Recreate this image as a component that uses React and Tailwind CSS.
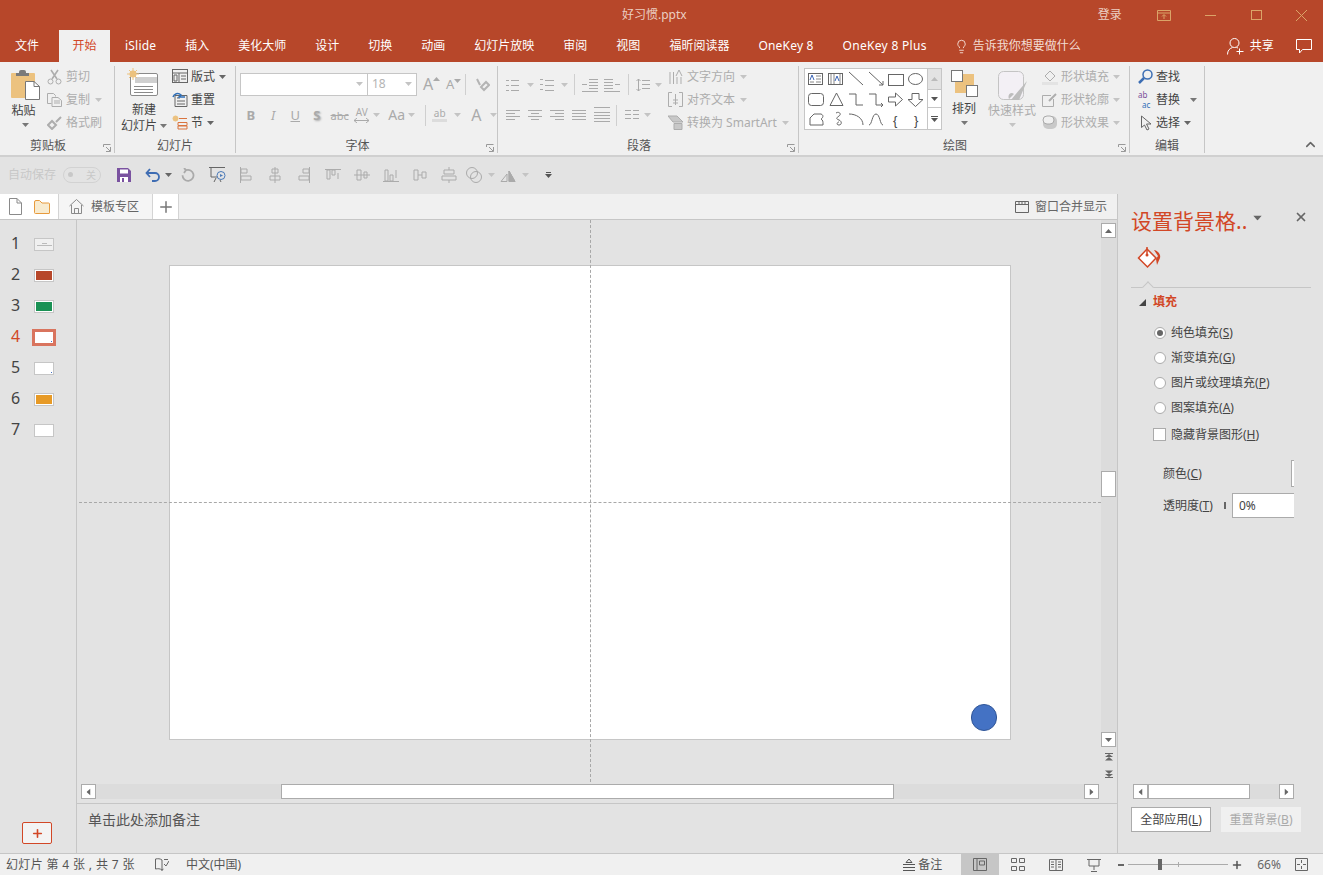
import { ChevronUp, Lightbulb, Plus, X } from 'lucide-react';

const tabs = ['插入', '美化大师', '设计', '切换', '动画', '幻灯片放映', '审阅', '视图', '福昕阅读器'];

const slides = [
  { n: 1, kind: 'title' },
  { n: 2, fill: 'bg-[#b7472a]' },
  { n: 3, fill: 'bg-[#1a9154]' },
  { n: 4, kind: 'dot', active: true },
  { n: 5, kind: 'dot' },
  { n: 6, fill: 'bg-[#e79a26]' },
  { n: 7 },
];

function Ico({ w = 16, h = 16, className = '', sw = 1, children }) {
  return (
    <svg width={w} height={h} viewBox={`0 0 ${w} ${h}`} fill="none" stroke="currentColor" strokeWidth={sw} className={`shrink-0 ${className}`}>
      {children}
    </svg>
  );
}

function Caret({ className = 'text-[#777]' }) {
  return (
    <svg width="7" height="4" viewBox="0 0 7 4" className={`shrink-0 ${className}`}>
      <path d="M0 0h7L3.5 4z" fill="currentColor" />
    </svg>
  );
}

function Launcher() {
  return (
    <svg width="8" height="8" viewBox="0 0 8 8" fill="none" stroke="#999" className="absolute right-[3px] bottom-[1px]">
      <path d="M.5 3V.5H7.5M3 7.5H7.5V3M3 3l4 4" />
    </svg>
  );
}

function Group({ width, label, launcher, children }) {
  return (
    <div className={`relative flex h-[87px] shrink-0 flex-col border-r border-[#c6c6c6] ${width}`}>
      <div className="h-[72px] flex-none">{children}</div>
      <div className={`flex h-[15px] items-center justify-center text-[#555] ${launcher ? 'pr-[18px]' : ''}`}>{label}</div>
      {launcher && <Launcher />}
    </div>
  );
}

function Row({ icon, text, caret, off, gap = 'gap-[4px]' }) {
  return (
    <div className={`flex h-[23px] items-center ${gap} ${off ? 'text-[#adadad]' : 'text-[#444]'}`}>
      {icon}
      <span className="whitespace-nowrap">{text}</span>
      {caret && <span className="ml-[1px] flex"><Caret className={off ? 'text-[#c4c4c4]' : 'text-[#666]'} /></span>}
    </div>
  );
}

function Lines({ rows, w = 14, h = 14, children }) {
  return (
    <Ico w={w} h={h} className="text-[#aaa]">
      {rows.map(([x1, x2, y]) => (
        <path key={`${x1}-${x2}-${y}`} d={`M${x1} ${y + 0.5}H${x2}`} />
      ))}
      {children}
    </Ico>
  );
}

function Combo({ width, text }) {
  return (
    <div className={`flex h-[23px] items-center justify-between border border-[#c6c6c6] bg-white pl-[4px] pr-[4px] text-[#b4b4b4] ${width}`}>
      <span>{text}</span>
      <Caret className="text-[#c4c4c4]" />
    </div>
  );
}

function PasteIcon() {
  return (
    <svg width="29" height="30" viewBox="0 0 29 30" className="shrink-0">
      <rect x="0" y="3" width="24" height="25" rx="1" fill="#ecc27f" />
      <path d="M8 3V2a2 2 0 0 1 2-2h3a2 2 0 0 1 2 2v1h3v3H5V3z" fill="#7a7a7a" />
      <path d="M14.5 11.5H23l5.5 5V29.5h-14z" fill="#fff" stroke="#777" />
      <path d="M23 11.5V16.5H28.5" fill="none" stroke="#777" />
    </svg>
  );
}

function NewSlideIcon() {
  return (
    <svg width="31" height="29" viewBox="0 0 31 29" className="shrink-0">
      <rect x="3.5" y="5.5" width="27" height="22" rx="1.5" fill="#fff" stroke="#8a8a8a" />
      <path d="M8 9h22v6H8z" fill="#cfcfcf" />
      <path d="M7 18.5h19M7 21.5h19M7 24.5h19" stroke="#8a8a8a" />
      <circle cx="6" cy="6" r="3.5" fill="#ecc27f" />
      <path d="M6 0v12M0 6h12M2 2l8 8M10 2l-8 8" stroke="#ecc27f" />
    </svg>
  );
}

function Gallery() {
  return (
    <svg width="122" height="62" viewBox="0 0 122 62" fill="none" stroke="#666" className="shrink-0">
      <rect x="3.5" y="5.5" width="14" height="11" />
      <path d="M11 8h5M11 11h5M11 14h5M5 14h4" stroke="#888" />
      <path d="M5 12l2-5 2 5" stroke="#3c66b8" />
      <rect x="23.5" y="5.5" width="14" height="11" />
      <path d="M26 6v10M29 6v10M35 6v10" stroke="#888" />
      <path d="M30 13l2-5 2 5" stroke="#3c66b8" />
      <path d="M44 4l14 13M64 4l14 13M74 17h4v-4" />
      <rect x="83.5" y="6.5" width="15" height="11" />
      <ellipse cx="110.5" cy="11" rx="7" ry="5.5" />
      <rect x="3.5" y="25.5" width="15" height="12" rx="3" />
      <path d="M25 37.5L31.5 25 38 37.5z" />
      <path d="M44 26h7v11h7M64 26h7v11h7m-2-2 2 2-2 2" />
      <path d="M83.5 29h7v-4l7 6.5-7 6.5v-4h-7zM107 25.5h7v6h4l-7.500 7-7.500-7h4z" />
      <path d="M5 56V50l4-4h7c3 1 2 4 0 5 2 1 2 3 2 5v1H5z" />
      <path d="M31 45c3-2 6 1 3 3s-3 3 0 4 3 5 0 5-2-3 0-3" />
      <path d="M44 46c7 0 14 4 14 11M64 57c3 0 3-11 7-11s4 11 7 11" />
      <text x="88" y="57" fontSize="13" fill="#444" stroke="none" fontFamily="Liberation Sans">{'{'}</text>
      <text x="109" y="57" fontSize="13" fill="#444" stroke="none" fontFamily="Liberation Sans">{'}'}</text>
    </svg>
  );
}

function Ribbon() {
  return (
    <div className="flex h-[95px] flex-none border-b-2 border-[#d0d0d0] bg-[#f0f0f0] pt-[4px]">
      <Group width="w-[115px]" label="剪贴板" launcher>
        <div className="flex">
          <div className="ml-[11px] flex w-[29px] flex-col items-center pt-[4px]">
            <PasteIcon />
            <span className="-ml-[4px] mt-[5px] whitespace-nowrap text-[#444]">粘贴</span>
            <span className="-ml-[1px] mt-[6px]"><Caret /></span>
          </div>
          <div className="ml-[7px] -mt-[1px]">
            <Row off icon={<Ico w={15} h={16}><circle cx="3.500" cy="12.500" r="2.500" /><circle cx="11.500" cy="12.500" r="2.500" /><path d="M4 1l6 9M11 1L5 10" strokeWidth="1.600" /></Ico>} text="剪切" />
            <Row off caret icon={<Ico w={15} h={15}><path d="M.5 1.500h6l2 2v1M.5 1.500V11.500h4M5 5.500h6l3.500 3V14.500H5zM7 9h6M7 11h6" /></Ico>} text="复制" />
            <Row off icon={<Ico w={15} h={14} sw={2}><path d="M14 1L9 6M1 9l4 4 4-4-4-4z" /></Ico>} text="格式刷" />
          </div>
        </div>
      </Group>

      <Group width="w-[121px]" label="幻灯片">
        <div className="flex">
          <div className="flex w-[55px] flex-col items-center pt-[2px] pl-[3px]">
            <span className="mr-[3px]"><NewSlideIcon /></span>
            <span className="mt-[7px] text-[#444]">新建</span>
            <span className="mt-[4px] flex items-center gap-[3px] whitespace-nowrap text-[#444]">幻灯片<Caret /></span>
          </div>
          <div className="ml-[2px] -mt-[1px]">
            <Row caret gap="gap-[3px]" icon={<Ico w={16} h={15} className="text-[#666]"><rect x=".5" y=".5" width="15" height="13" /><path d="M.5 4h15M7 4v10M9 7h5M9 10h5M2 6h3v6H2z" /></Ico>} text="版式" />
            <Row gap="gap-[3px]" icon={<Ico w={16} h={15}><path d="M3 3.500h12V14.500H3z" stroke="#666" /><path d="M5 6h3M5 9h8M5 12h8" stroke="#666" /><path d="M1 5c1-3 5-5 8-2L7 5h6" stroke="#2f6fb8" strokeWidth="1.500" /></Ico>} text="重置" />
            <Row caret gap="gap-[3px]" icon={<Ico w={16} h={15}><circle cx="3.500" cy="3.500" r="2.500" fill="#ecc27f" stroke="#ecc27f" /><path d="M7 3.500h8" stroke="#d9743f" /><path d="M6 7.500h9v3H6zM6 11h9v3H6z" stroke="#d9743f" /></Ico>} text="节" />
          </div>
        </div>
      </Group>

      <Group width="w-[262px]" label="字体" launcher>
        <div className="flex h-[33px] items-center pl-[4px] pt-[3px]">
          <Combo width="w-[128px]" text="" />
          <Combo width="w-[50px] -ml-[1px]" text="18" />
          <span className="ml-[6px] flex w-[23px] items-start text-[16px] leading-none text-[#aaa]">A<span className="mt-[1px]"><Caret className="rotate-180 text-[#aaa]" /></span></span>
          <span className="flex w-[19px] items-start text-[13px] leading-none text-[#aaa]">A<span className="mt-[1px]"><Caret className="text-[#aaa]" /></span></span>
          <span className="mr-[9px] h-[21px] w-px bg-[#cfcfcf]" />
          <Ico w={15} h={15} className="text-[#b4b4b4]" sw={2}><path d="M9 13l5-5-3-3-5 5zM2 2l3 6" /></Ico>
        </div>
        <div className="mt-[5px] flex h-[22px] items-center pl-[4px] text-[#aaa]">
          <span className="w-[22px] text-center text-[13px] font-bold">B</span>
          <span className="w-[23px] text-center text-[13px] italic">I</span>
          <span className="w-[22px] text-center text-[13px] underline">U</span>
          <span className="w-[22px] text-center text-[13px] font-bold [text-shadow:1px_1px_2px_#aaa]">S</span>
          <span className="w-[24px] text-center text-[11px] line-through">abc</span>
          <span className="ml-[1px] flex w-[19px] flex-col items-center gap-[1px] text-[10px] leading-none">
            AV
            <svg width="15" height="5" viewBox="0 0 15 5" fill="none" stroke="#aaa"><path d="M0 2.500h15M3 0L0 2.500 3 5M12 0l3 2.500L12 5" /></svg>
          </span>
          <Caret className="ml-[2px] text-[#c4c4c4]" />
          <span className="ml-[8px] w-[16px] text-[14px]">Aa</span>
          <Caret className="ml-[4px] text-[#c4c4c4]" />
          <span className="ml-[10px] mr-[6px] h-[21px] w-px bg-[#cfcfcf]" />
          <span className="flex w-[15px] flex-col items-center text-[10px] leading-none">
            ab
            <span className="mt-[1px] h-[3px] w-[15px] bg-[#dcdcdc]" />
          </span>
          <Caret className="ml-[7px] text-[#c4c4c4]" />
          <span className="ml-[10px] w-[12px] text-[16px]">A</span>
          <Caret className="ml-[7px] text-[#c4c4c4]" />
        </div>
      </Group>

      <Group width="w-[301px]" label="段落" launcher>
        <div className="flex">
          <div className="w-[167px] pl-[8px]">
            <div className="flex h-[33px] items-center pt-[4px]">
              <Lines rows={[[5, 13, 2], [5, 13, 7], [5, 13, 12], [0, 3, 2], [0, 3, 7], [0, 3, 12]]} />
              <Caret className="ml-[7px] text-[#c4c4c4]" />
              <span className="ml-[6px]"><Lines rows={[[5, 14, 2], [5, 14, 7], [5, 14, 12], [0, 3, 1], [0, 3, 6], [0, 3, 11]]} /></span>
              <Caret className="ml-[7px] text-[#c4c4c4]" />
              <span className="ml-[6px] mr-[7px] h-[21px] w-px bg-[#cfcfcf]" />
              <Lines w={16} rows={[[7, 16, 1], [7, 16, 4], [7, 16, 7], [7, 16, 10], [0, 16, 13], [0, 5, 6]]} />
              <span className="ml-[6px]"><Lines w={16} rows={[[0, 9, 1], [0, 9, 4], [0, 9, 7], [0, 9, 10], [0, 16, 13], [11, 16, 6]]} /></span>
              <span className="ml-[8px] mr-[7px] h-[21px] w-px bg-[#cfcfcf]" />
              <Lines rows={[[6, 14, 2], [6, 14, 6], [6, 14, 10]]}>
                <path d="M2.500 1v12M.5 3l2-2 2 2M.5 11l2 2 2-2" />
              </Lines>
              <Caret className="ml-[5px] text-[#c4c4c4]" />
            </div>
            <div className="mt-[4px] flex h-[24px] items-center gap-[8px]">
              <Lines rows={[[0, 14, 2], [0, 9, 5], [0, 14, 8], [0, 9, 11]]} />
              <Lines rows={[[0, 14, 2], [3, 11, 5], [0, 14, 8], [3, 11, 11]]} />
              <Lines rows={[[0, 14, 2], [5, 14, 5], [0, 14, 8], [5, 14, 11]]} />
              <Lines rows={[[0, 14, 2], [0, 14, 5], [0, 14, 8], [0, 14, 11]]} />
              <Lines w={16} h={16} rows={[[0, 16, 0], [0, 16, 5], [0, 16, 8], [0, 16, 11], [0, 16, 14]]} />
              <span className="-ml-[2px] h-[21px] w-px bg-[#cfcfcf]" />
              <Lines rows={[[0, 6, 2], [8, 14, 2], [0, 6, 6], [8, 14, 6], [0, 6, 10], [8, 14, 10]]} />
              <Caret className="-ml-[3px] text-[#c4c4c4]" />
            </div>
          </div>
          <div className="ml-[3px] -mt-[1px]">
            <Row off caret icon={<Ico w={15} h={16}><path d="M2 3v12M5.500 3v12M9 8v7M13 8v7" /><path d="M8 7l3-6 3 6" /></Ico>} text="文字方向" />
            <Row off caret icon={<Ico w={15} h={15}><path d="M4 .5H.5v14H4M11 .5h3.500v14H11M7.500 2v11M5 8h5M5 11h5" /></Ico>} text="对齐文本" />
            <Row off caret icon={<Ico w={15} h={15}><path d="M0 1h9l6 6H5zM6 8.500h8v6H6z" fill="#c8c8c8" /></Ico>} text="转换为 SmartArt" />
          </div>
        </div>
      </Group>

      <Group width="w-[331px]" label="绘图" launcher>
        <div className="flex">
          <div className="ml-[5px] mt-[2px] flex h-[62px] w-[138px] border border-[#c6c6c6] bg-white">
            <div className="-mt-px"><Gallery /></div>
            <div className="flex w-[15px] flex-col border-l border-[#c6c6c6]">
              <div className="flex h-[20px] items-center justify-center bg-[#e3e3e3]"><Caret className="rotate-180 text-[#bbb]" /></div>
              <div className="flex h-[19px] items-center justify-center border-y border-[#c6c6c6]"><Caret className="text-[#555]" /></div>
              <div className="flex flex-1 flex-col items-center justify-center gap-[1px]"><span className="h-px w-[7px] bg-[#555]" /><Caret className="text-[#555]" /></div>
            </div>
          </div>
          <div className="ml-[6px] flex w-[32px] flex-col items-center pt-[4px]">
            <svg width="27" height="27" viewBox="0 0 27 27" className="shrink-0">
              <path d="M4 4h19v19H4z" fill="#ecc27f" />
              <rect x=".5" y=".5" width="11" height="11" fill="#fff" stroke="#777" />
              <rect x="15.500" y="15.500" width="11" height="11" fill="#fff" stroke="#777" />
            </svg>
            <span className="mt-[6px] whitespace-nowrap text-[#444]">排列</span>
            <span className="mt-[6px]"><Caret /></span>
          </div>
          <div className="ml-[8px] flex w-[48px] flex-col items-center pt-[5px] text-[#adadad]">
            <svg width="30" height="30" viewBox="0 0 30 30" className="ml-[2px] shrink-0">
              <rect x=".5" y=".5" width="25" height="28" rx="5" fill="#f3f0f5" stroke="#c4c4c4" />
              <path d="M29 10L17 24l-4 5h8zM11 28c-2-4 2-8 5-5z" fill="#bdbdbd" />
            </svg>
            <span className="mt-[4px] whitespace-nowrap">快速样式</span>
            <span className="mt-[6px]"><Caret className="text-[#c4c4c4]" /></span>
          </div>
          <div className="ml-[6px] -mt-[1px]">
            <Row off caret icon={<Ico w={16} h={16}><path d="M3 7l5-5 5 5-5 5z" /><path d="M0 14.500h16" strokeWidth="3" stroke="#e3e3e3" /></Ico>} text="形状填充" gap="gap-[3px]" />
            <Row off caret icon={<Ico w={16} h={15}><path d="M9 3.500H.5v11h11V7" /><path d="M7 9l7-7" strokeWidth="2" /></Ico>} text="形状轮廓" gap="gap-[3px]" />
            <Row off caret icon={<svg width="16" height="15" viewBox="0 0 16 15" className="shrink-0"><rect x="1" y="1" width="14" height="13" rx="5" fill="#c9c9c9" /><rect x="1" y="1" width="11" height="8" rx="4" fill="#f0f0f0" stroke="#aaa" /></svg>} text="形状效果" gap="gap-[3px]" />
          </div>
        </div>
      </Group>

      <Group width="w-[75px]" label="编辑">
        <div className="-mt-[1px] pl-[8px]">
          <Row gap="gap-[3px]" icon={<Ico w={15} h={15} className="text-[#3c6eb4]" sw={1.500}><circle cx="9.500" cy="5.500" r="4.500" /><path d="M6 9l-5 5" strokeWidth="2.500" /></Ico>} text="查找" />
          <div className="flex h-[23px] items-center gap-[3px] text-[#444]">
            <span className="flex h-[20px] w-[15px] flex-col text-[8px] leading-[10px]"><span className="text-[#7a4f9a]">ab</span><span className="pl-[4px] text-[#2f6fb8]">ac</span></span>
            <span>替换</span>
            <span className="ml-[7px]"><Caret /></span>
          </div>
          <Row gap="gap-[3px]" caret icon={<Ico w={15} h={16} className="text-[#666]"><path d="M3.500 1v11.500l3-2.500 2.500 5 2-1-2.500-5H13z" /></Ico>} text="选择" />
        </div>
      </Group>

      <div className="flex flex-1 items-end justify-end pb-[3px] pr-[5px]">
        <ChevronUp size={15} strokeWidth={2.500} className="text-[#666]" />
      </div>
    </div>
  );
}

function AlignIcon({ d }) {
  return (
    <Ico w={16} h={16} className="text-[#ababab]">
      <path d={d} />
    </Ico>
  );
}

function QuickBar() {
  return (
    <div className="flex h-[37px] flex-none items-center bg-[#e3e3e3] pb-[2px] pl-[8px]">
      <span className="w-[48px] whitespace-nowrap text-[#c8c8c8]">自动保存</span>
      <span className="ml-[7px] flex h-[16px] w-[38px] items-center justify-between rounded-full border border-[#d2d2d2] px-[4px] text-[10px] leading-none text-[#c8c8c8]">
        <span className="h-[5px] w-[5px] rounded-full bg-[#c8c8c8]" />关
      </span>
      <svg width="14" height="14" viewBox="0 0 14 14" className="ml-[16px] shrink-0">
        <path d="M0 0h11l3 3v11H0z" fill="#7a52a0" />
        <path d="M3 1.500h8v4H3zM3 9h8v5H3z" fill="#fff" />
        <path d="M5 10h2v4H5z" fill="#7a52a0" />
      </svg>
      <svg width="16" height="14" viewBox="0 0 16 14" fill="none" stroke="#3f6db3" strokeWidth="1.800" className="ml-[14px] shrink-0">
        <path d="M1.500 5H10a4 4 0 0 1 0 8H7M5 1L1.500 5 5 9" />
      </svg>
      <Caret className="ml-[4px] text-[#666]" />
      <svg width="14" height="14" viewBox="0 0 14 14" fill="none" stroke="#aaa" strokeWidth="1.800" className="ml-[9px] shrink-0">
        <path d="M5 2.200a5.500 5.500 0 1 1-3.500 5M3 0l2 2-2 3" />
      </svg>
      <svg width="17" height="17" viewBox="0 0 17 17" fill="none" stroke="#666" className="ml-[14px] shrink-0">
        <path d="M0 1.500h16M2 2v9h6M5 16l2-4M12 16l-1-2" />
        <circle cx="12" cy="9.500" r="4" stroke="#4b7ab8" />
        <path d="M11 8l3 1.500-3 1.500z" fill="#4b7ab8" stroke="none" />
      </svg>
      <div className="ml-[12px] flex items-center gap-[13px]">
        <AlignIcon d="M2.500 0v16M3 2h6v4H3zM3 9h10v4H3z" />
        <AlignIcon d="M8 0v16M5 2h6v4H5zM3 9h10v4H3z" />
        <AlignIcon d="M13.500 0v16M7 2h6v4H7zM3 9h10v4H3z" />
        <AlignIcon d="M0 2.500h16M2 3v9h3V3zM7 3v5h3V3zM13 6v6" />
        <AlignIcon d="M0 8h16M3 3h4v10H3zM10 5h3v6h-3z" />
        <AlignIcon d="M0 14.500h16M2 3v11h3V3zM7 8v6h3V8zM13 3v8" />
        <AlignIcon d="M2 3h4v10H2zM10 5h4v6h-4zM6 8h4" />
        <AlignIcon d="M8 0v3M8 13v3M3 3h10v4H3zM1 9h14v4H1z" />
      </div>
      <svg width="16" height="16" viewBox="0 0 16 16" fill="none" stroke="#aaa" className="ml-[9px] shrink-0">
        <circle cx="6" cy="6" r="5.500" />
        <circle cx="10" cy="10" r="5.500" />
      </svg>
      <Caret className="ml-[6px] text-[#c4c4c4]" />
      <svg width="16" height="14" viewBox="0 0 16 14" fill="none" stroke="#aaa" className="ml-[5px] shrink-0">
        <path d="M1 13.500h6V6zM9 3v10.500h6z" />
        <path d="M9 3v10.500h6z" fill="#aaa" />
      </svg>
      <Caret className="ml-[6px] text-[#c4c4c4]" />
      <span className="ml-[16px] flex flex-col items-center gap-[1px]">
        <span className="h-px w-[5px] bg-[#555]" />
        <Caret className="text-[#555]" />
      </span>
    </div>
  );
}

function TabStrip() {
  return (
    <div className="flex h-[26px] flex-none border-b border-[#c6c6c6] bg-[#f0f0f0]">
      <div className="flex w-[59px] items-center gap-[12px] border-r border-[#d4d4d4] bg-white pl-[9px]">
        <svg width="13" height="17" viewBox="0 0 13 17" fill="none" stroke="#8a8a8a" className="shrink-0">
          <path d="M.5.500H8l4.500 4.500V16.500H.5zM8 .5V5h4.500" />
        </svg>
        <svg width="16" height="14" viewBox="0 0 16 14" className="shrink-0">
          <path d="M.5 2a1.500 1.500 0 0 1 1.500-1.500h3.500L8 3h6.500a1 1 0 0 1 1 1v9a.5.5 0 0 1-.5.5H1.500a1 1 0 0 1-1-1z" fill="#f8ebcf" stroke="#e79a3c" />
        </svg>
      </div>
      <div className="flex w-[94px] items-center border-r border-[#d4d4d4] bg-[#f5f5f5] pl-[10px] text-[#666]">
        <svg width="15" height="15" viewBox="0 0 15 15" fill="none" stroke="#8a8a8a" className="shrink-0">
          <path d="M.5 7L7.500.5l7 6.500M2.500 6v8.500h10V6M5.500 14.500v-5h4v5" />
        </svg>
        <span className="ml-[7px] whitespace-nowrap">模板专区</span>
      </div>
      <div className="flex w-[26px] items-center justify-center border-r border-[#d4d4d4] bg-white">
        <Plus size={18} strokeWidth={2} className="text-[#777]" />
      </div>
      <div className="flex flex-1 items-center justify-end gap-[6px] border-r border-[#c6c6c6] pr-[10px] text-[#666]">
        <svg width="14" height="12" viewBox="0 0 14 12" fill="none" stroke="#666" className="shrink-0">
          <path d="M.5.500h13v11H.5zM.5 3.500h13M3 2h2M6 2h2M9 2h2" />
        </svg>
        <span className="whitespace-nowrap">窗口合并显示</span>
      </div>
    </div>
  );
}

function Thumb({ slide }) {
  const ring = slide.active ? 'border-[3px] border-[#d9745e]' : 'border border-[#c6c6c6]';
  const size = slide.active ? 'h-[17px] w-[24px]' : 'h-[13px] w-[20px]';
  return (
    <div className={`relative flex items-center justify-center bg-white ${ring} ${size}`}>
      {slide.fill && <div className={`h-[9px] w-[16px] ${slide.fill}`} />}
      {slide.kind === 'title' && (
        <div className="flex h-full w-full flex-col items-center justify-center gap-[1px] bg-[#f0f0f0]">
          <span className="h-px w-[5px] bg-[#bbb]" />
          <span className="h-px w-[15px] bg-[#bbb]" />
        </div>
      )}
      {slide.kind === 'dot' && <span className="absolute bottom-[1px] right-[1px] h-px w-px bg-[#4472c4]" />}
    </div>
  );
}

function SlideRail() {
  return (
    <div className="flex w-[77px] flex-none flex-col border-r border-[#c6c6c6] pt-[9px]">
      {slides.map((slide) => (
        <div key={slide.n} className="flex h-[31px] items-center">
          <span className={`-mt-[3px] w-[32px] pl-[11px] text-[16px] leading-none ${slide.active ? 'text-[#d24726]' : 'text-[#444]'}`}>{slide.n}</span>
          <div className="flex w-[24px] justify-center"><Thumb slide={slide} /></div>
        </div>
      ))}
      <div className="mt-auto mb-[9px] ml-[22px] flex h-[22px] w-[30px] items-center justify-center rounded-[2px] border border-[#d24726] bg-[#f3f3f3]">
        <Plus size={13} strokeWidth={3} className="text-[#d24726]" />
      </div>
    </div>
  );
}

function ScrollBtn({ dir }) {
  const rot = { up: 'rotate-180', down: '', left: 'rotate-90', right: '-rotate-90' }[dir];
  return (
    <div className="flex h-[15px] w-[15px] flex-none items-center justify-center border border-[#ababab] bg-white">
      <Caret className={`text-[#666] ${rot}`} />
    </div>
  );
}

function Canvas() {
  return (
    <div className="flex min-h-0 flex-1">
      <div className="relative flex-1 pl-[92px] pt-[45px]">
        <div className="relative h-[475px] w-[842px] border border-[#c6c6c6] bg-white">
          <div className="absolute bottom-[8px] right-[13px] h-[27px] w-[26px] rounded-full border border-[#2f5597] bg-[#4472c4]" />
        </div>
        <div className="absolute bottom-[2px] left-[513px] top-0 border-l border-dashed border-[#a8a8a8]" />
        <div className="absolute left-[2px] right-0 top-[282px] border-t border-dashed border-[#a8a8a8]" />
      </div>
      <div className="flex w-[16px] flex-none flex-col">
        <div className="flex h-[527px] flex-none flex-col bg-[#dcdcdc] pt-[3px]">
          <ScrollBtn dir="up" />
          <div className="mt-[233px] h-[26px] w-[15px] border border-[#ababab] bg-white" />
          <div className="mt-auto"><ScrollBtn dir="down" /></div>
        </div>
        <div className="mt-[6px] flex flex-col items-center gap-[9px] pr-[1px] text-[#666]">
          <svg width="8" height="8" viewBox="0 0 8 8" fill="currentColor"><path d="M0 0h8v1H0zM4 1l4 3H0zM4 4l4 3.500H0z" /></svg>
          <svg width="8" height="8" viewBox="0 0 8 8" fill="currentColor"><path d="M0 7h8v1H0zM4 7l4-3H0zM4 4l4-3.500H0z" /></svg>
        </div>
      </div>
    </div>
  );
}

function FormatPane() {
  const fills = ['纯色填充', '渐变填充', '图片或纹理填充', '图案填充'];
  const keys = ['S', 'G', 'P', 'A'];
  return (
    <div className="flex w-[205px] flex-none flex-col pt-[11px] text-[#444]">
      <div className="flex h-[32px] flex-none items-center pl-[13px]">
        <span className="w-[115px] whitespace-nowrap text-[21px] leading-none text-[#d24726]">设置背景格..</span>
        <span className="ml-[8px] -mt-[6px]"><Caret className="scale-125 text-[#666]" /></span>
        <X size={14} strokeWidth={3} className="ml-[33px] -mt-[8px] text-[#666]" />
      </div>
      <div className="ml-[19px] mt-[9px] flex-none">
        <svg width="24" height="24" viewBox="0 0 24 24" className="block">
          <path d="M10 3l9 9-8.500 9L1.500 12z" fill="#fff" stroke="#d24726" strokeWidth="1.500" />
          <path d="M10 1v8" stroke="#d24726" strokeWidth="1.500" />
          <circle cx="10" cy="9" r="1.500" fill="#d24726" />
          <path d="M17 4c4 1 7 4 6 8l-3 7-1-6 2-3z" fill="#d24726" />
        </svg>
      </div>
      <div className="relative ml-[13px] mr-[12px] mt-[17px] h-px flex-none bg-[#c6c6c6]">
        <span className="absolute -top-[4px] left-[13px] h-[8px] w-[8px] rotate-45 border-l border-t border-[#c6c6c6] bg-[#e3e3e3]" />
      </div>
      <div className="ml-[21px] mt-[6px] flex h-[16px] flex-none items-center">
        <svg width="7" height="7" viewBox="0 0 7 7"><path d="M7 0v7H0z" fill="#444" /></svg>
        <span className="ml-[7px] font-bold text-[#d24726]">填充</span>
      </div>
      <div className="mt-[10px] flex flex-none flex-col pl-[36px]">
        {fills.map((f, i) => (
          <div key={f} className="flex h-[25px] items-center gap-[5px] whitespace-nowrap">
            <span className="flex h-[12px] w-[12px] items-center justify-center rounded-full border border-[#ababab] bg-white">
              {i === 0 && <span className="h-[6px] w-[6px] rounded-full bg-[#666]" />}
            </span>
            <span>{f}(<span className="underline">{keys[i]}</span>)</span>
          </div>
        ))}
        <div className="mt-[2px] -ml-[1px] flex h-[25px] items-center gap-[5px] whitespace-nowrap">
          <span className="h-[13px] w-[13px] border border-[#ababab] bg-white" />
          <span>隐藏背景图形(<span className="underline">H</span>)</span>
        </div>
      </div>
      <div className="ml-[45px] mt-[13px] flex h-[27px] w-[131px] flex-none items-center justify-between overflow-hidden">
        <span>颜色(<span className="underline">C</span>)</span>
        <span className="h-[27px] w-[3px] border-y border-l border-[#ababab] bg-white" />
      </div>
      <div className="ml-[45px] mt-[6px] flex h-[25px] w-[131px] flex-none items-center">
        <span className="whitespace-nowrap">透明度(<span className="underline">T</span>)</span>
        <span className="ml-[11px] h-[7px] w-[2px] bg-[#666]" />
        <span className="ml-[6px] flex h-[25px] flex-1 items-center border-y border-l border-[#ababab] bg-white pl-[6px]">0%</span>
      </div>
      <div className="mt-auto flex h-[15px] flex-none pl-[15px]">
        <ScrollBtn dir="left" />
        <div className="flex w-[131px] bg-[#dcdcdc]">
          <div className="h-[15px] w-[102px] border border-[#ababab] bg-white" />
        </div>
        <ScrollBtn dir="right" />
      </div>
      <div className="mb-[21px] mt-[8px] flex flex-none gap-[10px] pl-[13px]">
        <div className="flex h-[25px] w-[80px] items-center justify-center whitespace-nowrap border border-[#ababab] bg-white">全部应用(<span className="underline">L</span>)</div>
        <div className="flex h-[25px] w-[80px] items-center justify-center whitespace-nowrap bg-[#f0f0f0] text-[#aaa]">重置背景(<span className="underline">B</span>)</div>
      </div>
    </div>
  );
}

function StatusBar() {
  return (
    <div className="flex h-[22px] flex-none items-center border-t border-[#c6c6c6] bg-[#f0f0f0] text-[#555]">
      <span className="ml-[6px] w-[130px] whitespace-nowrap tracking-[0.35px]">幻灯片 第 4 张 , 共 7 张</span>
      <svg width="14" height="14" viewBox="0 0 14 14" fill="none" stroke="#666" className="ml-[19px] shrink-0">
        <path d="M7 2C5 .5 3 .5.500 1v10c2.500-.5 4.500-.5 6.500 1 .5-.5 1-.7 1.500-.9M7 2v11M9 1.500h4M9 6l2 2 3-5" />
      </svg>
      <span className="ml-[17px] whitespace-nowrap">中文(中国)</span>
      <svg width="12" height="12" viewBox="0 0 12 12" fill="none" stroke="#555" className="ml-[662px] shrink-0">
        <path d="M0 5.500h12M0 8.500h12M0 11.500h12M6 0L3 3.500h6z" />
      </svg>
      <span className="ml-[3px] whitespace-nowrap">备注</span>
      <div className="ml-[19px] flex h-full w-[38px] items-center justify-center bg-[#c6c6c6]">
        <svg width="14" height="13" viewBox="0 0 14 13" fill="none" stroke="#666"><path d="M.5.500h13v12H.5zM4 .5v12M6.500 3h5v4h-5z" /></svg>
      </div>
      <svg width="14" height="13" viewBox="0 0 14 13" fill="none" stroke="#666" className="ml-[12px] shrink-0"><path d="M.5.500h5v4h-5zM8.500.5h5v4h-5zM.5 8.500h5v4h-5zM8.500 8.500h5v4h-5z" /></svg>
      <svg width="14" height="13" viewBox="0 0 14 13" fill="none" stroke="#666" className="ml-[24px] shrink-0"><path d="M.5 1.500h13v11H.5zM7 1.500v11M2 4h3M2 6.500h3M2 9h3M9 4h3M9 6.500h3M9 9h3" /></svg>
      <svg width="14" height="14" viewBox="0 0 14 14" fill="none" stroke="#666" className="ml-[24px] shrink-0"><path d="M0 1.500h14M2 2v6h10V2M7 8v4M4 13.500h6" /></svg>
      <span className="ml-[17px] h-[2px] w-[6px] bg-[#666]" />
      <div className="relative ml-[4px] h-px w-[100px] bg-[#ababab]">
        <span className="absolute -top-[5px] left-[30px] h-[11px] w-[4px] bg-[#666]" />
        <span className="absolute -top-[2px] left-[50px] h-[5px] w-px bg-[#ababab]" />
      </div>
      <Plus size={12} strokeWidth={3} className="ml-[3px] text-[#555]" />
      <span className="ml-[14px] w-[38px] text-[#666]">66%</span>
      <svg width="13" height="13" viewBox="0 0 13 13" fill="none" stroke="#666" className="shrink-0"><path d="M.5.500h12v12H.5zM6.500 2v3M6.500 8v3M2 6.500h3M8 6.500h3" /></svg>
    </div>
  );
}

export default function App() {
  return (
    <div className="flex h-[875px] w-[1323px] flex-col overflow-hidden bg-[#e3e3e3] font-['Noto_Sans','Noto_Sans_CJK_SC',sans-serif] text-[12px] leading-none">
      <div className="flex h-[30px] flex-none items-center bg-[#b7472a] text-[#eccfc2]">
        <span className="ml-[622px] whitespace-nowrap">好习惯.pptx</span>
        <span className="ml-[411px] whitespace-nowrap">登录</span>
        <svg width="14" height="11" viewBox="0 0 14 11" fill="none" stroke="#dba468" className="ml-[35px]"><path d="M.5.500h13v10H.5zM.5 3h13M7 9V5M5 6.500L7 4.500l2 2" /></svg>
        <span className="ml-[34px] h-px w-[11px] bg-[#dba468]" />
        <span className="ml-[35px] h-[10px] w-[11px] border border-[#dba468]" />
        <svg width="11" height="11" viewBox="0 0 11 11" stroke="#dba468" className="ml-[34px]"><path d="M0 0l11 11M11 0L0 11" /></svg>
      </div>
      <div className="flex h-[32px] flex-none items-end bg-[#b7472a] text-white">
        <div className="flex h-full items-center gap-[29px] pl-[15px]">
          <span className="-mr-[9px]">文件</span>
          <span className="-mr-[14px] flex h-full w-[51px] items-center justify-center bg-[#f0f0f0] text-[#d24726]">开始</span>
          <span className="tracking-[0.2px]">iSlide</span>
          {tabs.map((t) => (
            <span key={t} className="whitespace-nowrap">{t}</span>
          ))}
          <span className="whitespace-nowrap tracking-[0.2px]">OneKey 8</span>
          <span className="whitespace-nowrap tracking-[0.3px]">OneKey 8 Plus</span>
        </div>
        <div className="flex h-full items-center text-[#f3dcd3]">
          <Lightbulb size={15} strokeWidth={1.500} className="ml-[27px]" />
          <span className="ml-[4px] whitespace-nowrap">告诉我你想要做什么</span>
        </div>
        <div className="flex h-full items-center">
          <svg width="17" height="17" viewBox="0 0 17 17" fill="none" stroke="currentColor" className="ml-[146px] shrink-0">
            <circle cx="7.500" cy="5" r="4.500" />
            <path d="M.5 16.500c0-4 2-6 5-7M9.500 9.500l1.500.5M12.500 10.500v6M9.500 13.500h7" />
          </svg>
          <span className="ml-[6px] whitespace-nowrap">共享</span>
          <svg width="16" height="15" viewBox="0 0 16 15" fill="none" stroke="currentColor" className="ml-[22px] shrink-0">
            <path d="M.5.500h15v10H6.500l-3 3.500v-3.500h-3z" />
          </svg>
        </div>
      </div>
      <Ribbon />
      <QuickBar />
      <div className="flex min-h-0 flex-1">
        <div className="flex w-[1118px] flex-none flex-col">
          <TabStrip />
          <div className="flex min-h-0 flex-1">
            <SlideRail />
            <div className="flex w-[1041px] flex-none flex-col border-r border-[#c6c6c6]">
              <Canvas />
              <div className="flex h-[15px] flex-none items-center pl-[4px] pr-[18px]">
                <ScrollBtn dir="left" />
                <div className="flex h-full flex-1 bg-[#dcdcdc] pl-[185px]">
                  <div className="h-[15px] w-[613px] border border-[#ababab] bg-white" />
                </div>
                <ScrollBtn dir="right" />
              </div>
              <div className="mt-[4px] flex h-[50px] flex-none items-start border-t border-[#c6c6c6] pl-[11px] pt-[7px] text-[14px] leading-[18px] text-[#555]">单击此处添加备注</div>
            </div>
          </div>
        </div>
        <FormatPane />
      </div>
      <StatusBar />
    </div>
  );
}
